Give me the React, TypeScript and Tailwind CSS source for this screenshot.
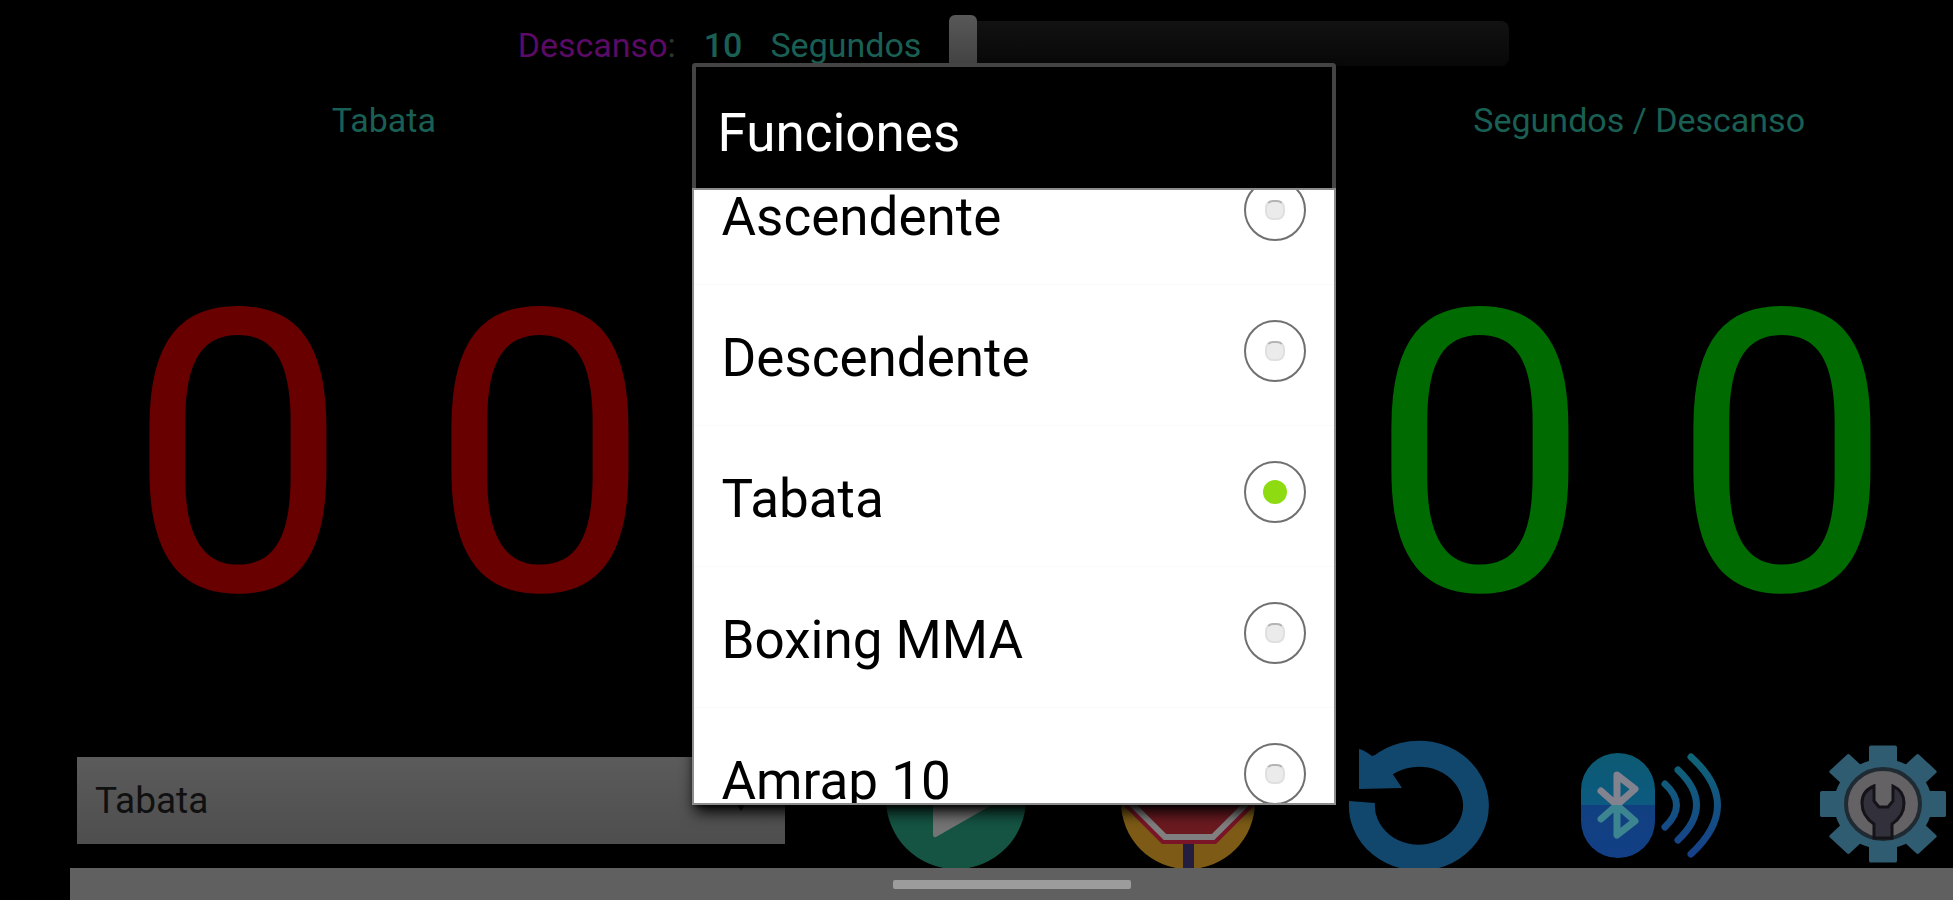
import React, { useLayoutEffect, useRef, useState } from 'react';

const FUNCTIONS = ['Ascendente', 'Descendente', 'Tabata', 'Boxing MMA', 'Amrap 10'];

const PlayIcon = () => (
  <svg viewBox="0 0 140 140" className="size-full" aria-hidden="true">
    <circle cx="70" cy="71" r="70" fill="#155443" />
    <path d="M47 30 L118 70 L50 109 Q47 110 47 106 Z" fill="#747474" />
  </svg>
);

const StopIcon = () => (
  <svg viewBox="0 0 140 140" className="size-full" aria-hidden="true">
    <circle cx="70" cy="74" r="67" fill="#7d5b16" />
    <rect x="65" y="112" width="11" height="28" fill="#231d40" />
    <path d="M44 -12 H98 L135 25 V79 L98 116 H44 L7 79 V25 Z" fill="#7a1527" />
    <path d="M47 -5 H95 L128 28 V76 L95 109 H47 L14 76 V28 Z" fill="#6b1a20" stroke="#808080" strokeWidth="6" />
  </svg>
);

const ResetIcon = () => (
  <svg viewBox="0 0 140 140" className="size-full overflow-visible" aria-hidden="true">
    <path d="M12 74 A57 52 0 1 0 32 38" fill="none" stroke="#12476d" strokeWidth="26" />
    <path d="M9 21 Q14 22 22 28 L30 26 L50 42 L42 45 L52 60 L9 61 Z" fill="#12476d" />
  </svg>
);

const BluetoothIcon = () => (
  <svg viewBox="0 0 140 140" className="size-full" aria-hidden="true">
    <defs>
      <linearGradient id="pill" gradientUnits="userSpaceOnUse" x1="0" y1="25" x2="0" y2="130">
        <stop offset="0" stopColor="#0c5a72" />
        <stop offset="0.5" stopColor="#0c5a80" />
        <stop offset="0.5" stopColor="#114081" />
        <stop offset="1" stopColor="#123f85" />
      </linearGradient>
      <linearGradient id="rune" gradientUnits="userSpaceOnUse" x1="0" y1="25" x2="0" y2="130">
        <stop offset="0.5" stopColor="#83838f" />
        <stop offset="0.5" stopColor="#3c8490" />
      </linearGradient>
      <linearGradient id="waves" gradientUnits="userSpaceOnUse" x1="0" y1="25" x2="0" y2="130">
        <stop offset="0" stopColor="#0f6577" />
        <stop offset="1" stopColor="#173f8b" />
      </linearGradient>
    </defs>
    <rect x="0" y="25" width="74" height="105" rx="37" fill="url(#pill)" />
    <path
      d="M20 63 L54 93 L36 107 V47 L54 61 L20 91"
      fill="none"
      stroke="url(#rune)"
      strokeWidth="7"
      strokeLinecap="round"
      strokeLinejoin="round"
    />
    <g fill="none" stroke="url(#waves)" strokeWidth="7" strokeLinecap="round">
      <path d="M84 56 Q107 77 84 99" />
      <path d="M97 42 Q134 77 97 112" />
      <path d="M110 29 Q163 77 110 126" />
    </g>
  </svg>
);

const SettingsIcon = () => (
  <svg viewBox="0 0 140 140" className="size-full" aria-hidden="true">
    <g fill="#2f5c70">
      <ellipse cx="70" cy="76" rx="49" ry="45" />
      {/* teeth, squashed a little so the gear is wider than tall */}
      <g transform="translate(70 76) scale(1 0.93)">
        {[0, 45, 90, 135].map(angle => (
          <rect key={angle} x="-14" y="-63" width="28" height="126" rx="2" transform={`rotate(${angle})`} />
        ))}
      </g>
    </g>
    <ellipse cx="70" cy="76" rx="37" ry="35" fill="#656265" stroke="#1f2a33" strokeWidth="4" />
    <path
      d="M61 110 V96 Q49 88 49 75 Q49 63 61 58 V73 L66 79 H75 L80 73 V58 Q91 63 91 75 Q91 88 79 96 V110 Z"
      fill="#32303a"
      stroke="#141318"
      strokeWidth="3"
    />
  </svg>
);

const ACTIONS = [
  { label: 'Iniciar', Icon: PlayIcon },
  { label: 'Parar', Icon: StopIcon },
  { label: 'Reiniciar', Icon: ResetIcon },
  { label: 'Bluetooth', Icon: BluetoothIcon },
  { label: 'Ajustes', Icon: SettingsIcon },
];

interface FunctionDialogProps {
  selected: string;
  onSelect: (name: string) => void;
}

const FunctionDialog: React.FC<FunctionDialogProps> = ({ selected, onSelect }) => {
  const listRef = useRef<HTMLDivElement>(null);

  // Open with the current function in the middle of the list
  useLayoutEffect(() => {
    const list = listRef.current;
    const row = list?.querySelector<HTMLElement>('label:has(input:checked)');
    if (list && row) {
      list.scrollTop = row.offsetTop - (list.clientHeight - row.offsetHeight) / 2;
    }
  }, []);

  return (
    <div className="fixed inset-0 flex items-center justify-center pb-8 pl-[74px]">
      <div
        role="dialog"
        aria-labelledby="dialog-title"
        className="flex h-[742px] max-h-full w-[644px] max-w-full flex-col rounded-sm bg-black shadow-lg shadow-black"
      >
        <h2
          id="dialog-title"
          className="rounded-t-sm border-4 border-b-0 border-[#444] px-[22px] pt-9 pb-6 text-[53px] leading-[61px] text-white"
        >
          Funciones
        </h2>
        <div
          ref={listRef}
          className="relative flex-1 overflow-y-auto border-2 border-[#8c8c8c] bg-white [scrollbar-width:none]"
        >
          {FUNCTIONS.map(name => (
            <label
              key={name}
              className="flex h-[141px] items-center justify-between border-b border-[#fafafa] px-7 text-[53px] text-black"
            >
              <span className="pt-2">{name}</span>
              <input
                type="radio"
                name="function"
                checked={selected === name}
                onChange={() => onSelect(name)}
                className="mb-2 flex size-[62px] shrink-0 appearance-none items-center justify-center rounded-full border-2 border-[#707070] before:size-5 before:rounded-lg before:border-2 before:border-[#e0e0e0] before:border-t-[#b4b4b4] before:bg-[#ebebeb] checked:before:size-6 checked:before:rounded-full checked:before:border-0 checked:before:bg-[#8edb12]"
              />
            </label>
          ))}
        </div>
      </div>
    </div>
  );
};

const App: React.FC = () => {
  const [selected, setSelected] = useState('Tabata');
  const [rest, setRest] = useState(10);

  return (
    <div className="flex min-h-screen flex-col overflow-hidden bg-black font-[Roboto,sans-serif]">
      <div className="flex h-[90px] items-center justify-center gap-7 pl-[74px] text-[34px] text-[#1a5f54]">
        <label htmlFor="rest" className="text-[#5b0a66]">
          Descanso<span className="text-[#2a3a2a]">:</span>
        </label>
        <span className="font-medium">{rest}</span>
        <span>Segundos</span>
        <input
          id="rest"
          type="range"
          min={10}
          max={60}
          value={rest}
          onChange={e => setRest(Number(e.target.value))}
          className="mb-1 h-14 w-[560px] appearance-none bg-transparent [&::-webkit-slider-runnable-track]:h-[45px] [&::-webkit-slider-runnable-track]:rounded-lg [&::-webkit-slider-runnable-track]:bg-linear-to-b [&::-webkit-slider-runnable-track]:from-[#121212] [&::-webkit-slider-runnable-track]:to-[#080808] [&::-webkit-slider-thumb]:-mt-1.5 [&::-webkit-slider-thumb]:h-14 [&::-webkit-slider-thumb]:w-7 [&::-webkit-slider-thumb]:appearance-none [&::-webkit-slider-thumb]:rounded-md [&::-webkit-slider-thumb]:bg-linear-to-b [&::-webkit-slider-thumb]:from-[#585858] [&::-webkit-slider-thumb]:to-[#404040]"
        />
      </div>

      <div className="grid h-[60px] grid-cols-3 items-center pl-[70px] text-center text-[34px] text-[#1a5f54]">
        <span>Tabata</span>
        <span className="col-start-3">Segundos / Descanso</span>
      </div>

      <div className="grid flex-1 grid-cols-[302fr_302fr_638fr_302fr_302fr] items-center pt-8 pr-5 pl-[87px] text-center text-[394px] leading-none">
        <span className="text-[#680000]">0</span>
        <span className="text-[#680000]">0</span>
        <span className="col-start-4 text-[#006b00]">0</span>
        <span className="text-[#006b00]">0</span>
      </div>

      <div className="grid grid-cols-[708fr_1067fr] items-end gap-[101px] pl-[77px]">
        <div className="relative pb-6">
          <select
            aria-label="Función"
            value={selected}
            onChange={e => setSelected(e.target.value)}
            className="block h-[87px] w-full appearance-none bg-linear-to-b from-[#5b5b5b] to-[#4e4e4e] px-[18px] text-[37px] text-[#101010]"
          >
            {FUNCTIONS.map(name => (
              <option key={name}>{name}</option>
            ))}
          </select>
          <svg viewBox="0 0 24 18" className="pointer-events-none absolute top-9 right-8 h-[18px] w-6" aria-hidden="true">
            <path d="M0 0 H24 L12 18 Z" fill="#101010" />
          </svg>
        </div>
        <div className="flex justify-between">
          {ACTIONS.map(({ label, Icon }) => (
            <button key={label} type="button" aria-label={label} className="size-[140px]">
              <Icon />
            </button>
          ))}
        </div>
      </div>

      <div className="relative ml-[70px] flex h-8 items-center justify-center bg-[#606060]">
        <div className="h-[9px] w-[238px] rounded-xs bg-[#9c9c9c]" />
      </div>

      <FunctionDialog selected={selected} onSelect={setSelected} />
    </div>
  );
};

export default App;
